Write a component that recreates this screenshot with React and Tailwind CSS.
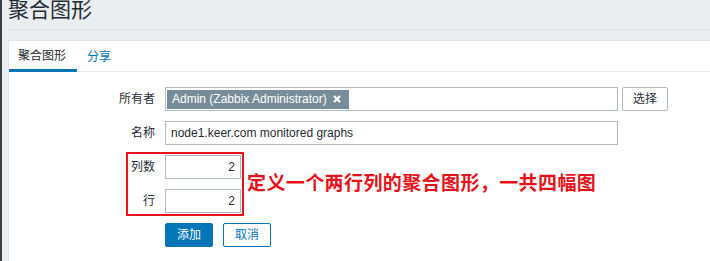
import React from 'react'

const font = { fontFamily: '"Liberation Sans", Arial, "Noto Sans CJK SC", sans-serif' }

function Row({ label, children }) {
  return (
    <div className="flex h-[24px] items-center">
      <div className="w-[147px] pr-[1px] text-right text-[12px] text-[#1f2c33]">{label}</div>
      <div className="ml-[9px] flex h-full items-center">{children}</div>
    </div>
  )
}

export default function App() {
  return (
    <div className="relative flex h-[261px] w-[710px] overflow-hidden bg-[#ebeef0]" style={font}>
      <div className="w-[2px] shrink-0 bg-[#3a3e41]" />
      <div className="flex flex-1 flex-col pl-[6px]">
        {/* header */}
        <div className="h-[30px] border-b border-[#dde2e5]">
          <h1 className="-mt-[3px] text-[21px] leading-[26px] text-[#1f2c33]">聚合图形</h1>
        </div>

        {/* panel */}
        <div className="mt-[10px] flex-1 border-l border-t border-[#dfe4e7] bg-white">
          <div className="flex h-[31px] border-b border-[#ebeef0] text-[12px]">
            <div className="-mb-px flex items-center border-b-[3px] border-[#0275b8] pl-[9px] pr-[11px] pt-[2px] text-[#1f2c33]">
              聚合图形
            </div>
            <div className="flex items-center px-[10px] pt-[2px] text-[#0275b8]">分享</div>
          </div>

          <div className="mt-[15px] flex flex-col gap-[10px]">
            <Row label="所有者">
              <div className="flex h-[24px] w-[453px] items-center border border-[#acbbc2] px-[1px]">
                <span className="flex h-[19px] items-center gap-[6px] bg-[#768d99] pl-[5px] pr-[8px] text-[12px] text-white">
                  Admin (Zabbix Administrator)
                  <svg width="8" height="8" viewBox="0 0 8 8">
                    <path d="M1 1 L7 7 M7 1 L1 7" stroke="white" strokeWidth="2.2" />
                  </svg>
                </span>
              </div>
              <button className="ml-[4px] h-[24px] w-[46px] rounded-[2px] border border-[#acbbc2] bg-white text-[12px] text-[#1f2c33]">
                选择
              </button>
            </Row>
            <Row label="名称">
              <div className="flex h-[24px] w-[453px] items-center border border-[#acbbc2] px-[5px] text-[12px] text-[#1f2c33]">
                node1.keer.com monitored graphs
              </div>
            </Row>
            <Row label="列数">
              <div className="flex h-[24px] w-[76px] items-center justify-end border border-[#acbbc2] px-[5px] text-[12px] text-[#1f2c33]">
                2
              </div>
            </Row>
            <Row label="行">
              <div className="flex h-[24px] w-[76px] items-center justify-end border border-[#acbbc2] px-[5px] text-[12px] text-[#1f2c33]">
                2
              </div>
            </Row>
            <Row label="">
              <button className="h-[24px] w-[48px] rounded-[2px] border border-[#0275b8] bg-[#0275b8] text-[12px] text-white">
                添加
              </button>
              <button className="ml-[10px] h-[24px] w-[48px] rounded-[2px] border border-[#0275b8] bg-white text-[12px] text-[#0275b8]">
                取消
              </button>
            </Row>
          </div>
        </div>
      </div>

      {/* annotation overlay */}
      <div className="absolute left-[126px] top-[152px] h-[64px] w-[118px] border-2 border-[#e8121b]" />
      <div className="absolute left-[247px] top-[170px] text-[19px] font-bold leading-[24px] tracking-[0.4px] text-[#e8121b]" style={{ fontFamily: '"Noto Sans CJK SC", sans-serif' }}>
        定义一个两行列的聚合图形，一共四幅图
      </div>
    </div>
  )
}
